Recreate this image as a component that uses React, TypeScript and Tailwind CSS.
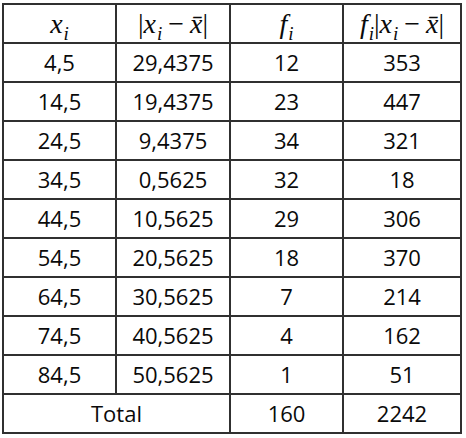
const rows = [
  ['4,5', '29,4375', '12', '353'],
  ['14,5', '19,4375', '23', '447'],
  ['24,5', '9,4375', '34', '321'],
  ['34,5', '0,5625', '32', '18'],
  ['44,5', '10,5625', '29', '306'],
  ['54,5', '20,5625', '18', '370'],
  ['64,5', '30,5625', '7', '214'],
  ['74,5', '40,5625', '4', '162'],
  ['84,5', '50,5625', '1', '51'],
];

const cell = 'border-2 border-[#303030] text-center align-middle p-0 h-[39px]';

function Sub({ children }: { children: string }) {
  return <sub className="text-[19px] italic relative top-[1px] ml-[1px] align-sub">{children}</sub>;
}

function XBar() {
  return <span className="italic">x&#772;</span>;
}

function AbsDev() {
  return (
    <>
      |<span className="italic">x</span>
      <Sub>i</Sub>
      <span className="mx-[6px]">−</span>
      <XBar />|
    </>
  );
}

export default function App() {
  return (
    <div className="w-[466px] h-[438px] bg-white pl-[2px] pt-[3px]">
      <table
        className="border-collapse table-fixed text-[#0a0a0a] text-[22px]"
        style={{ fontFamily: '"Open Sans", sans-serif' }}
      >
        <colgroup>
          <col className="w-[113px]" />
          <col className="w-[114px]" />
          <col className="w-[113px]" />
          <col className="w-[118px]" />
        </colgroup>
        <thead>
          <tr className="text-[28px] leading-none" style={{ fontFamily: '"Liberation Serif", serif' }}>
            <th className={cell + ' font-normal'}>
              <span className="italic">x</span>
              <Sub>i</Sub>
            </th>
            <th className={cell + ' font-normal'}>
              <AbsDev />
            </th>
            <th className={cell + ' font-normal'}>
              <span className="italic">f</span>
              <Sub>i</Sub>
            </th>
            <th className={cell + ' font-normal'}>
              <span className="italic">f</span>
              <Sub>i</Sub>
              <AbsDev />
            </th>
          </tr>
        </thead>
        <tbody>
          {rows.map((r) => (
            <tr key={r[0]}>
              {r.map((v, i) => (
                <td key={i} className={cell}>
                  {v}
                </td>
              ))}
            </tr>
          ))}
          <tr>
            <td colSpan={2} className={cell}>
              Total
            </td>
            <td className={cell}>160</td>
            <td className={cell}>2242</td>
          </tr>
        </tbody>
      </table>
    </div>
  );
}
